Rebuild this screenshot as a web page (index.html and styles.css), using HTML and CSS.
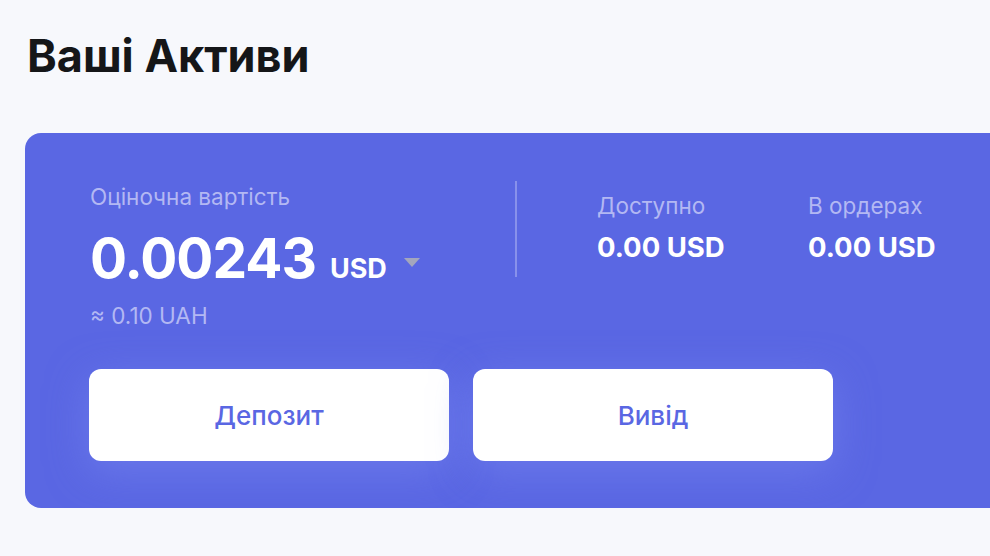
FILE: index.html
```html
<!DOCTYPE html>
<html lang="uk">
<head>
<meta charset="utf-8">
<link rel="stylesheet" href="styles.css">
</head>
<body>
<main class="page">
  <h1 class="title">Ваші Активи</h1>
  <section class="card">
    <div class="top">
      <div class="estimate">
        <div class="label">Оціночна вартість</div>
        <div class="value-row">
          <span class="big">0.00243</span>
          <span class="cur">USD</span>
          <svg class="caret" width="16" height="9" viewBox="0 0 16 9"><path d="M0 0H16L8 9Z" fill="#a3a6bd"/></svg>
        </div>
        <div class="approx">≈ 0.10 UAH</div>
      </div>
      <div class="divider"></div>
      <div class="stats">
        <div class="stat">
          <div class="label">Доступно</div>
          <div class="stat-val">0.00 USD</div>
        </div>
        <div class="stat">
          <div class="label">В ордерах</div>
          <div class="stat-val">0.00 USD</div>
        </div>
      </div>
    </div>
    <div class="actions">
      <button class="btn">Депозит</button>
      <button class="btn">Вивід</button>
    </div>
  </section>
</main>
</body>
</html>
```

FILE: styles.css
```css
html, body {
  margin: 0;
  padding: 0;
  background: #f7f8fc;
  overflow: hidden;
  font-family: Inter, "Noto Sans", sans-serif;
}
.page {
  padding: 28px 0 0 25px;
}
.title {
  margin: 0 0 0 2px;
  font-size: 45px;
  line-height: 56px;
  font-weight: 700;
  color: #151618;
  letter-spacing: 0;
}
.card {
  margin-top: 49px;
  width: 1000px;
  height: 375px;
  box-sizing: border-box;
  background: #5a67e3;
  border-radius: 16px 0 0 16px;
  padding: 50px 0 0 65px;
}
.top {
  display: flex;
  align-items: flex-start;
}
.estimate {
  width: 425px;
}
.label {
  font-size: 22.5px;
  line-height: 28px;
  color: #b3b8f3;
}
.value-row {
  display: flex;
  align-items: baseline;
  margin-top: 15px;
  height: 64px;
}
.big {
  font-size: 55px;
  line-height: 64px;
  font-weight: 700;
  color: #fff;
  letter-spacing: -1px;
}
.cur {
  margin-left: 14px;
  font-size: 27px;
  font-weight: 700;
  color: #fff;
}
.caret {
  margin-left: 17px;
  align-self: center;
  position: relative;
  top: 4px;
}
.approx {
  margin-top: 12px;
  font-size: 22.5px;
  line-height: 28px;
  color: #b3b8f3;
}
.divider {
  width: 2px;
  height: 96px;
  margin-top: -2px;
  background: rgba(255,255,255,0.28);
}
.stats {
  display: flex;
  margin-left: 80px;
  margin-top: 9px;
}
.stat {
  width: 211px;
}
.stat-val {
  margin-top: 10px;
  font-size: 27.5px;
  line-height: 34px;
  font-weight: 700;
  color: #fff;
}
.actions {
  display: flex;
  gap: 24px;
  margin-top: 39px;
  margin-left: -1px;
}
.btn {
  width: 360px;
  height: 92px;
  border: none;
  border-radius: 12px;
  background: #fff;
  color: #5a67e3;
  font-family: Inter, "Noto Sans", sans-serif;
  font-size: 26px;
  font-weight: 500;
  box-shadow: 0 10px 40px rgba(120, 135, 240, 0.55);
  cursor: pointer;
}
```
